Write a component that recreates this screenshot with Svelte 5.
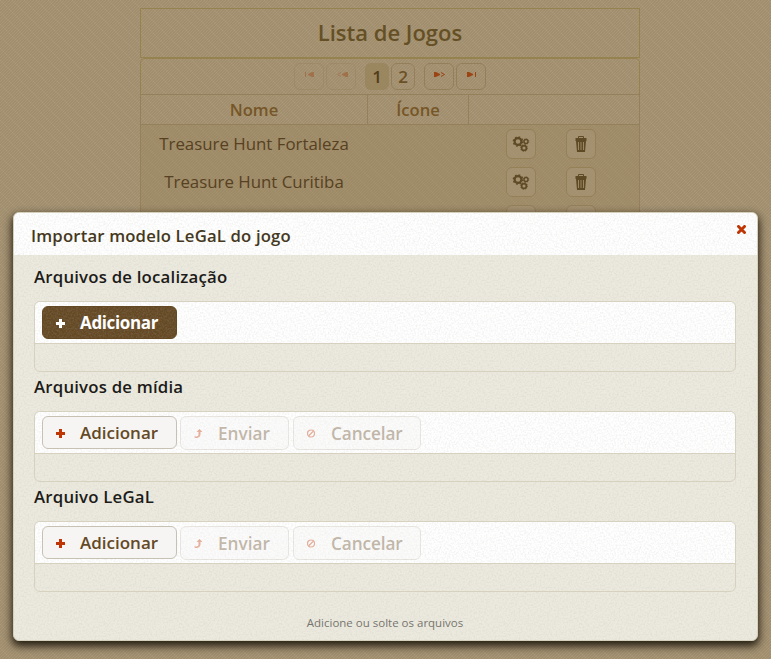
<script>
  const games = ['Treasure Hunt Fortaleza', 'Treasure Hunt Curitiba', ''];
  const sections = [
    { title: 'Arquivos de localização', active: true },
    { title: 'Arquivos de mídia', active: false },
    { title: 'Arquivo LeGaL', active: false }
  ];
</script>

{#snippet gears()}
  <svg width="18" height="18" viewBox="0 0 18 18" fill="none" stroke="#5f4a26">
    <circle cx="6" cy="6.5" r="3.4" stroke-width="2.2" />
    <circle cx="6" cy="6.5" r="4.7" stroke-width="1.3" stroke-dasharray="1.7 1.99" />
    <circle cx="14" cy="6.5" r="2" stroke-width="1.4" />
    <circle cx="14" cy="6.5" r="2.8" stroke-width="0.7" stroke-dasharray="1.1 1.1" />
    <circle cx="12" cy="13" r="2.4" stroke-width="1.7" />
    <circle cx="12" cy="13" r="3.4" stroke-width="0.8" stroke-dasharray="1.3 1.37" />
  </svg>
{/snippet}

{#snippet trash()}
  <svg width="12" height="18" viewBox="0 0 12 18" fill="#5f4a26">
    <path d="M3 3V2Q3 1 4 1H8Q9 1 9 2V3H8V2H4V3ZM.5 3H11.500V6H.500ZM1 6H11L10 17H2Z" />
    <path d="M3.500 7V15M6 7V15M8.500 7V15" stroke="#a18e69" stroke-width=".9" />
  </svg>
{/snippet}

<div class="page">
  <div class="table">
    <div class="caption"><span>Lista de Jogos</span></div>
    <div class="pager">
      <span class="pg arrow off"><svg width="10" height="7" viewBox="0 0 10 7"><path d="M0 1H1V6H0ZM9 1V6H7L3 4V3L7 1Z" /></svg></span>
      <span class="pg arrow off prev"><svg width="12" height="7" viewBox="0 0 12 7"><path d="M12 1V6H10L6 4V3L10 1Z" /><path d="M5 1.500L1.500 3.500L5 5.500" fill="none" stroke="#a2552a" /></svg></span>
      <span class="pg num current">1</span>
      <span class="pg num">2</span>
      <span class="pg arrow next"><svg width="12" height="7" viewBox="0 0 12 7"><path d="M0 1V6H2L6 4V3L2 1Z" /><path d="M7 1.500L10.500 3.500L7 5.500" fill="none" stroke="#9b4514" /></svg></span>
      <span class="pg arrow last"><svg width="10" height="7" viewBox="0 0 10 7"><path d="M0 1V6H2L6 4V3L2 1ZM8 1H9V6H8Z" /></svg></span>
    </div>
    <div class="heads"><div class="name">Nome</div><div class="icon">Ícone</div><div></div></div>
    <div class="body">
      {#each games as game}
        <div class="row">
          <div class="name">{game}</div>
          <div class="space"></div>
          <span class="tool">{@render gears()}</span>
          <span class="tool">{@render trash()}</span>
        </div>
      {/each}
    </div>
  </div>

  <div class="dialog">
    <div class="bar">
      <span class="heading">Importar modelo LeGaL do jogo</span>
      <svg class="close" width="9" height="9" viewBox="0 0 9 9"><path d="M1.500 1.500L7.500 7.500M7.500 1.500L1.500 7.500" fill="none" stroke="#bf3604" stroke-width="2.900" stroke-linecap="square" /></svg>
    </div>
    <div class="content">
      {#each sections as s}
        <div class="section">
          <div class="label">{s.title}</div>
          <div class="box">
            <div class="toolbar">
              <span class="btn add" class:active={s.active}>
                <svg width="9" height="9" viewBox="0 0 9 9"><path d="M3 0H6V3H9V6H6V9H3V6H0V3H3Z" /></svg>
                <b>Adicionar</b>
              </span>
              {#if !s.active}
                <span class="btn send">
                  <svg width="9" height="9" viewBox="0 0 9 9"><path d="M5.500 0L8.500 3H6.500V6Q6 8.700 3 9H1L0 7.500H2.500Q4.500 7.500 4.500 5.500V3H2.500Z" /></svg>
                  <b>Enviar</b>
                </span>
                <span class="btn cancel">
                  <svg width="9" height="9" viewBox="0 0 9 9"><circle cx="4" cy="4.500" r="3.500" fill="none" stroke="#bf3604" stroke-width="1.200" /><path d="M1.500 7L6.500 2" stroke="#bf3604" stroke-width="1.200" /></svg>
                  <b>Cancelar</b>
                </span>
              {/if}
            </div>
          </div>
        </div>
      {/each}
      <div class="hint"><span>Adicione ou solte os arquivos</span></div>
    </div>
  </div>
</div>

<style>
  .page {
    --grain: url("data:image/svg+xml,%3Csvg xmlns='http://www.w3.org/2000/svg' width='100' height='100'%3E%3Cfilter id='n'%3E%3CfeTurbulence type='fractalNoise' baseFrequency='.57' numOctaves='2' stitchTiles='stitch'/%3E%3CfeColorMatrix values='0 0 0 0 .45 0 0 0 0 .45 0 0 0 0 .42 .42 0 0 0 -.16'/%3E%3C/filter%3E%3Crect width='100' height='100' filter='url(%23n)'/%3E%3C/svg%3E");
    --weave: url("data:image/svg+xml,%3Csvg xmlns='http://www.w3.org/2000/svg' width='3' height='3'%3E%3Cpath fill='%23c2b18d' fill-opacity='.24' d='M0 0h1v1H0zM1 2h1v1H1zM2 1h1v1H2z'/%3E%3C/svg%3E");
    --cross: url("data:image/svg+xml,%3Csvg xmlns='http://www.w3.org/2000/svg' width='12' height='12'%3E%3Cpath fill='%23c2b18d' fill-opacity='.15' d='M0 0h1v1H0zM1 1h1v1H1zM2 2h1v1H2zM3 3h1v1H3zM4 4h1v1H4zM5 5h1v1H5zM6 6h1v1H6zM7 7h1v1H7zM8 8h1v1H8zM9 9h1v1H9zM10 10h1v1h-1zM11 11h1v1h-1z'/%3E%3C/svg%3E");
    position: relative;
    box-sizing: border-box;
    width: 771px;
    height: 659px;
    overflow: hidden;
    padding: 8px 0 0 140px;
    font-family: 'Trebuchet MS', 'Open Sans', sans-serif;
    background: var(--cross), var(--weave), #a08e6f;
  }
  .page :global(svg) { display: block; flex: none; }
  .table { width: 500px; box-sizing: border-box; }
  .caption {
    height: 50px;
    box-sizing: border-box;
    border: 1px solid #96824f;
    display: flex;
    align-items: center;
    justify-content: center;
    font-size: 22px;
    line-height: 28px;
    padding-bottom: 2px;
    font-weight: 600;
    color: #655025;
  }
  .pager {
    height: 37px;
    box-sizing: border-box;
    border: 1px solid #96824f;
    border-bottom-color: #94805a;
    border-radius: 5px 5px 0 0;
    padding: 4px 0 0 153px;
    display: flex;
  }
  .pg {
    height: 27px;
    box-sizing: border-box;
    border: 1px solid #93805a;
    border-radius: 6px;
    display: flex;
    justify-content: center;
  }
  .arrow { width: 30px; margin-right: 2px; padding: 7px 0 0 1px; fill: #9b4514; }
  .off { opacity: .4; }
  .num { width: 24px; align-items: center; font-size: 17px; line-height: 24px; font-weight: 600; color: #6b5026; margin-right: 2px; }
  .prev { margin-right: 9px; }
  .current { background: rgba(148, 126, 84, .6); border-color: transparent; color: #523d1b; }
  .next { margin-left: 7px; }
  .heads {
    height: 29px;
    display: flex;
    border: 1px solid #94805a;
    border-top: 0;
    font-size: 16.600px;
    font-weight: 600;
    line-height: 29px;
    text-align: center;
    color: #765627;
  }
  .name { width: 226px; text-align: center; }
  .heads .name, .icon { border-right: 1px solid #94805a; }
  .icon { width: 100px; }
  .body { border: 1px solid #94805a; border-top: 0; background: rgba(152, 132, 86, .32); }
  .row { height: 38px; display: flex; align-items: center; font-size: 16.850px; color: #574122; }
  .row .name { padding-bottom: 2px; }
  .space { width: 139px; }
  .tool {
    width: 30px;
    height: 30px;
    box-sizing: border-box;
    margin-right: 30px;
    border: 1px solid #958058;
    border-radius: 6px;
    background: rgba(168, 150, 119, .5);
    display: flex;
    align-items: center;
    justify-content: center;
  }
  .dialog {
    position: absolute;
    left: 13px;
    top: 212px;
    width: 745px;
    height: 429px;
    box-sizing: border-box;
    border: 1px solid #d5d0bb;
    border-radius: 6px;
    background: var(--grain), #eceade;
    box-shadow: 0 4px 8px 1px rgba(20, 14, 5, .9);
    overflow: hidden;
  }
  .bar {
    height: 42px;
    display: flex;
    align-items: center;
    justify-content: space-between;
    padding: 0 11px 0 17px;
    background: var(--grain), #fff;
    color: #453821;
    font-size: 16.700px;
    font-weight: 600;
    letter-spacing: .17px;
  }
  .close { margin-top: -9px; }
  .heading { padding-top: 2px; }
  .content { padding: 0 21px 0 20px; }
  .section { height: 110px; }
  .label { height: 46px; line-height: 44px; font-size: 16.800px; letter-spacing: .2px; font-weight: 600; color: #1c1b19; }
  .box { height: 71px; margin-bottom: -7px; box-sizing: border-box; border: 1px solid #d6d2bf; border-radius: 6px; overflow: hidden; }
  .toolbar {
    height: 42px;
    box-sizing: border-box;
    border-bottom: 1px solid #d6d2bf;
    background: var(--grain), #fff;
    padding: 4px 0 0 7px;
    display: flex;
  }
  .btn {
    height: 33px;
    box-sizing: border-box;
    border: 1px solid #c7c1b4;
    border-radius: 6px;
    background: #f6f5f4;
    color: #644925;
    display: flex;
    align-items: center;
    font-size: 17.200px;
    fill: #bf3604;
  }
  .btn svg { margin-top: 1px; }
  .btn b { font-weight: 600; line-height: 31px; white-space: nowrap; }
  .add { width: 135px; padding-left: 13px; margin-right: 3px; font-size: 17px; }
  .add b { margin-left: 15px; }
  .add.active { background: var(--grain), #654924; border-color: #654924; color: #fff; fill: #fff; }
  .add.active b { font-weight: 700; letter-spacing: -.35px; }
  .send, .cancel { height: 34px; opacity: .38; }
  .send { width: 109px; padding-left: 13px; margin-right: 4px; }
  .send b { margin-left: 15px; }
  .cancel { width: 128px; padding-left: 13px; }
  .cancel b { margin-left: 15px; letter-spacing: -.1px; }
  .hint { text-align: center; font-size: 11.500px; line-height: 16px; padding-top: 30px; color: #77756f; }
</style>
